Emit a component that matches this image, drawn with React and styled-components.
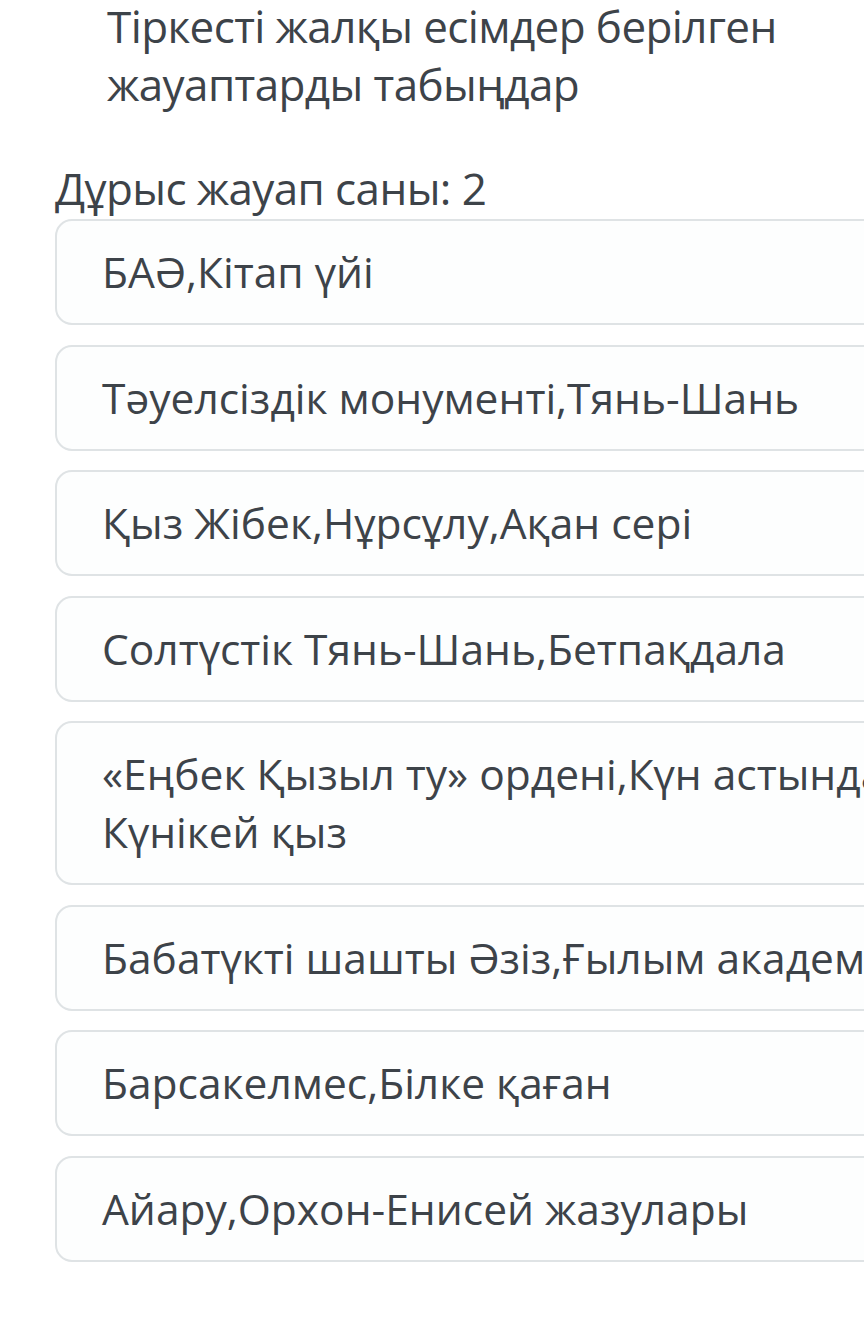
import React from 'react';
import styled, { createGlobalStyle } from 'styled-components';

const GlobalStyle = createGlobalStyle`
  * {
    margin: 0;
    padding: 0;
    box-sizing: border-box;
  }

  html, body {
    width: 864px;
    height: 1344px;
    overflow: hidden;
    background: #ffffff;
    font-family: "Open Sans", "Noto Sans", sans-serif;
    color: #3d4349;
  }
`;

const answers = [
  ['БАӘ,Кітап үйі'],
  ['Тәуелсіздік монументі,Тянь-Шань'],
  ['Қыз Жібек,Нұрсұлу,Ақан сері'],
  ['Солтүстік Тянь-Шань,Бетпақдала'],
  ['«Еңбек Қызыл ту» ордені,Күн астындағы', 'Күнікей қыз'],
  ['Бабатүкті шашты Әзіз,Ғылым академиясы'],
  ['Барсакелмес,Білке қаған'],
  ['Айару,Орхон-Енисей жазулары'],
];

const App = () => (
  <>
    <GlobalStyle />
    <Page>
      <Question>
        Тіркесті жалқы есімдер берілген
        <br />
        жауаптарды табыңдар
      </Question>
      <Counter>Дұрыс жауап саны: 2</Counter>
      <AnswerList>
        {answers.map((lines, i) => (
          <Answer key={i}>
            {lines.map((line, j) => (
              <Line key={j}>{line}</Line>
            ))}
          </Answer>
        ))}
      </AnswerList>
    </Page>
  </>
);

// Whole page column, cards run off the right edge
const Page = styled.div`
  display: flex;
  flex-direction: column;
  padding-left: 55px;
  width: 1200px;
`;

const Question = styled.h1`
  margin-left: 52px;
  margin-top: -3px;
  font-size: 44px;
  font-weight: 400;
  line-height: 58px;
  letter-spacing: -0.6px;
  white-space: nowrap;
`;

const Counter = styled.div`
  margin-top: 50px;
  font-size: 44px;
  line-height: 50px;
  letter-spacing: -0.6px;
`;

const AnswerList = styled.div`
  display: flex;
  flex-direction: column;
  gap: 19.5px;
  margin-top: 6px;
`;

const Answer = styled.div`
  width: 1100px;
  padding: 22px 0 22px 45px;
  border: 2px solid #dfe3e5;
  border-radius: 17px;
  background: #fdfefe;
  white-space: nowrap;
`;

const Line = styled.div`
  font-size: 42.5px;
  line-height: 58px;
`;

export default App;
